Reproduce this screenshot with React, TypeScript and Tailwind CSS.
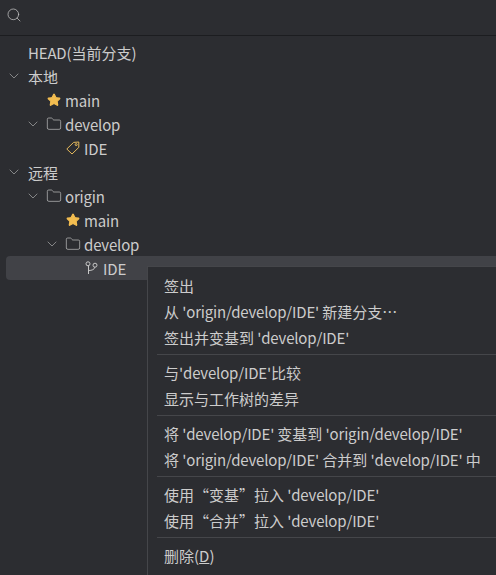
import type { ReactNode } from "react";
import { ChevronDown, Folder, Search, Star } from "lucide-react";

const font = { fontFamily: '"Noto Sans CJK SC", "Noto Sans", sans-serif' };

// latin runs sit slightly tighter than the CJK ones in the reference
function Txt({ text }: { text: string }) {
  return (
    <>
      {text.split(/([\x20-\x7e]+)/).map((part, i) =>
        i % 2 === 1 ? (
          <span key={i} className="tracking-[-0.17px]">
            {part}
          </span>
        ) : (
          part
        )
      )}
    </>
  );
}

function TagIcon() {
  return (
    <svg width="14" height="14" viewBox="0 0 14 14" fill="none" stroke="#e5b95c" strokeWidth="1">
      <path d="M0.8 8 L7.6 1.4 L12.8 1 L12.8 6.4 L6 13 Z" strokeLinejoin="round" />
      <circle cx="10.2" cy="3.6" r="1" />
    </svg>
  );
}

function BranchIcon() {
  return (
    <svg width="13" height="14" viewBox="0 0 13 14" fill="none" stroke="#c8c8c8" strokeWidth="1">
      <circle cx="3" cy="2.8" r="2" />
      <circle cx="10" cy="4.2" r="2" />
      <path d="M3.5 4.8 V13 M3.5 9.5 C7 9.5 9.5 8.5 9.8 6.2" />
    </svg>
  );
}

type RowProps = {
  level: number;
  label: string;
  open?: boolean;
  icon?: ReactNode;
  selected?: boolean;
};

function TreeRow({ level, label, open, icon, selected }: RowProps) {
  return (
    <div
      className={`ml-[6px] flex h-6 items-center rounded-l-[4px] ${selected ? "bg-[#414247]" : ""}`}
      style={{ paddingLeft: level * 19 }}
    >
      <div className="flex w-[22px] shrink-0 items-center">
        {open && <ChevronDown size={16} strokeWidth={1} className="text-[#b4b4b4]" />}
      </div>
      {icon && <div className="flex w-[18px] shrink-0 items-center">{icon}</div>}
      <span className="pt-[2px] text-[15px] leading-6 text-[#cccccc]">
        <Txt text={label} />
      </span>
    </div>
  );
}

const star = <Star size={14} className="fill-[#f3bd50] text-[#f3bd50]" />;
const folder = <Folder size={16} strokeWidth={1} className="-ml-px text-[#c8c8c8]" />;

function MenuItem({ children }: { children: ReactNode }) {
  return <div className="h-[26px] whitespace-nowrap pl-[16px] text-[15px] leading-[26px] text-[#cccccc]">{children}</div>;
}

function Separator() {
  return <div className="mb-[5px] ml-[9px] mt-[3px] h-px bg-[#45464a]" />;
}

export default function App() {
  return (
    <div className="relative h-[575px] w-[496px] overflow-hidden bg-[#2c2d31]" style={font}>
      <div className="flex h-9 items-start border-b border-[#1c1d20] pl-[6px] pt-[7px]">
        <Search size={16} strokeWidth={1.1} className="text-[#c8c8c8]" />
      </div>
      <div className="pt-[4px]">
        <TreeRow level={0} label="HEAD(当前分支)" />
        <TreeRow level={0} label="本地" open />
        <TreeRow level={1} label="main" icon={star} />
        <TreeRow level={1} label="develop" open icon={folder} />
        <TreeRow level={2} label="IDE" icon={<TagIcon />} />
        <TreeRow level={0} label="远程" open />
        <TreeRow level={1} label="origin" open icon={folder} />
        <TreeRow level={2} label="main" icon={star} />
        <TreeRow level={2} label="develop" open icon={folder} />
        <TreeRow level={3} label="IDE" icon={<BranchIcon />} selected />
      </div>

      {/* context menu */}
      <div className="absolute bottom-0 left-[147px] right-0 top-[266px] border-l border-t border-[#45464a] bg-[#2c2d31] pt-[6px]">
        <MenuItem>签出</MenuItem>
        <MenuItem>
          <Txt text="从 'origin/develop/IDE' 新建分支⋯" />
        </MenuItem>
        <MenuItem>
          <Txt text="签出并变基到 'develop/IDE'" />
        </MenuItem>
        <Separator />
        <MenuItem>
          <Txt text="与'develop/IDE'比较" />
        </MenuItem>
        <MenuItem>显示与工作树的差异</MenuItem>
        <Separator />
        <MenuItem>
          <Txt text="将 'develop/IDE' 变基到 'origin/develop/IDE'" />
        </MenuItem>
        <MenuItem>
          <Txt text="将 'origin/develop/IDE' 合并到 'develop/IDE' 中" />
        </MenuItem>
        <Separator />
        <MenuItem>
          <Txt text="使用“变基”拉入 'develop/IDE'" />
        </MenuItem>
        <MenuItem>
          <Txt text="使用“合并”拉入 'develop/IDE'" />
        </MenuItem>
        <Separator />
        <MenuItem>
          删除(<span className="underline">D</span>)
        </MenuItem>
      </div>
    </div>
  );
}
